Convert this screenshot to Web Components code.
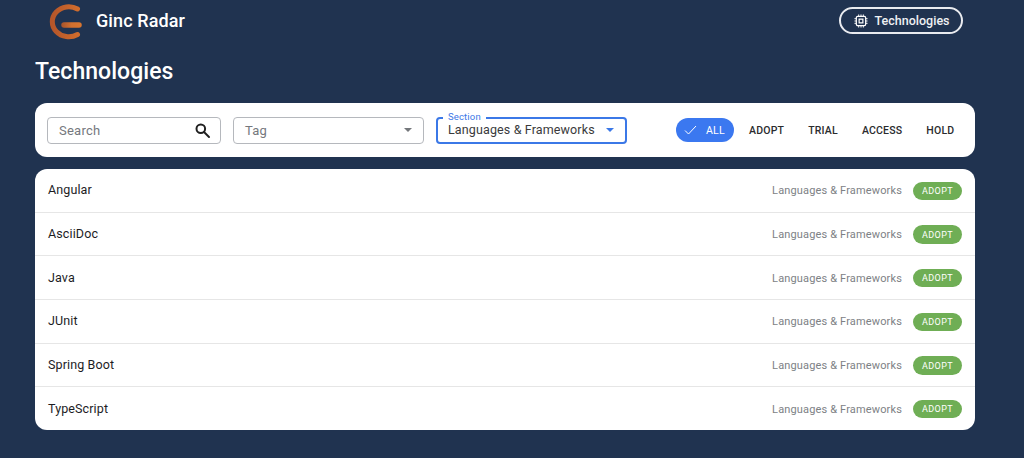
<!DOCTYPE html>
<html><head><meta charset="utf-8"><title>Ginc Radar</title>
<style>
html,body{margin:0;height:100%;}
body{background:#203350;font-family:Roboto,"Liberation Sans",sans-serif;overflow:hidden;}
</style></head><body>
<radar-app></radar-app>
<script>
function el(name,css,html,setup){
  customElements.define(name,class extends HTMLElement{
    constructor(){super();const r=this.attachShadow({mode:'open'});
      r.innerHTML='<style>'+css+'</style>'+(typeof html==='function'?html(this):html);}
    connectedCallback(){if(setup)setup(this);}
  });
}
el('radar-header',`:host{display:flex;align-items:center;height:41px;padding:0 61px 0 49px;color:#fff}
  svg{display:block;flex:none}
  .t{font-size:18px;font-weight:500;margin-left:14px;letter-spacing:.1px;flex:1;white-space:nowrap}
  .b{display:flex;align-items:center;justify-content:center;gap:6px;box-sizing:border-box;width:124px;height:27px;padding-left:2px;border:2px solid #e9ebef;border-radius:14px;font-size:12.500px;font-weight:500;letter-spacing:.02px;color:#eef0f3}`,
`<svg width="33" height="41" viewBox="0 0 33 41"><defs><linearGradient id="g" x1="0" x2="1" y1="0" y2="0"><stop offset="0" stop-color="#b5562a"/><stop offset="1" stop-color="#cf6c2d"/></linearGradient><linearGradient id="h" gradientUnits="userSpaceOnUse" x1="13" x2="32" y1="0" y2="0"><stop offset="0" stop-color="#a9552c"/><stop offset=".5" stop-color="#d2702f"/><stop offset="1" stop-color="#d9762f"/></linearGradient></defs>
<path d="M28.500 9 A 16.500 15 0 1 0 28.500 34.500" fill="none" stroke="url(#g)" stroke-width="5" stroke-linecap="round"/>
<path d="M15 25H30" fill="none" stroke="url(#h)" stroke-width="5.500" stroke-linecap="round"/></svg>
<span class="t">Ginc Radar</span>
<span class="b"><svg width="14" height="14" viewBox="0 0 15 15" fill="none" stroke="#fff"><rect x="2.500" y="2.500" width="10" height="10" rx="1.500" stroke-width="1.300"/><rect x="5.500" y="5.500" width="4" height="4" stroke-width="1.300"/><path d="M5 .5v2M7.500 .5v2M10 .5v2M5 12.500v2M7.500 12.500v2M10 12.500v2M.5 5h2M.5 7.500h2M.5 10h2M12.500 5h2M12.500 7.500h2M12.500 10h2" stroke-width="1"/></svg>Technologies</span>`);

el('radar-field',`:host{display:block;position:relative;box-sizing:border-box;height:27px;border:1px solid #b5b8bd;border-radius:4px;background:#fff;font-size:13px;letter-spacing:.25px;color:#75787d;white-space:nowrap}
  :host([focused]){border:2px solid #3b78e7;color:#3a3a3c;font-size:12.500px;letter-spacing:.13px}
  .in{display:flex;align-items:center;justify-content:space-between;height:100%;padding:0 11px 0 11px}
  :host([focused]) .in{padding:0 11px 0 10px}
  :host([focused]) .in>span:first-child{position:relative;top:-.5px}
  .lab{position:absolute;left:5px;top:-7px;background:#fff;padding:0 5px;font-size:9.500px;line-height:10px;color:#3b78e7;letter-spacing:.15px}
  .ar{width:0;height:0;border:4px solid transparent;border-top:4.500px solid #74777b;border-bottom:0}
  :host([focused]) .ar{border-top-color:#3b78e7}
  svg{display:block;margin-right:-2px}`,
(h)=>{const lab=h.getAttribute('label'),ic=h.getAttribute('icon');
  return (lab?`<span class="lab">${lab}</span>`:'')+`<div class="in"><span><slot></slot></span>`+
  (ic?`<svg width="17" height="17" viewBox="0 0 17 17" fill="none" stroke="#202020" stroke-width="2"><circle cx="6.800" cy="6.800" r="4.300"/><path d="M10 10l5 5" stroke-linecap="round"/></svg>`:`<span class="ar"></span>`)+`</div>`;});

el('radar-chips',`:host{display:flex;align-items:center;font-size:10.500px;font-weight:500;letter-spacing:.2px;color:#2a2b2e}
  span{display:flex;align-items:center;justify-content:center;height:24px;border-radius:12px;white-space:nowrap}
  .on{background:#3b78f0;color:#fff;width:58px;gap:9px;margin-right:15px;font-weight:400;letter-spacing:.3px}
  .on svg{margin-left:-1px}
  .a,.c,.d{margin-right:24px}
  svg{display:block}`,
`<span class="on"><svg width="13" height="10" viewBox="0 0 13 10" fill="none" stroke="#fff" stroke-width="1"><path d="M1 5.500l3.500 3.500L12 1"/></svg>ALL</span><span class="a">ADOPT</span><span class="c">TRIAL</span><span class="d">ACCESS</span><span>HOLD</span>`);

el('radar-toolbar',`:host{display:flex;align-items:center;box-sizing:border-box;height:54px;padding:0 21px 0 12px;background:#fff;border-radius:12px}
  .s{width:174px;margin-right:12px;flex:none}.t{width:191px;margin-right:12px;flex:none}.f{width:191px;margin-right:49px;flex:none}
  radar-chips{flex:none}`,
`<radar-field class="s" icon="search">Search</radar-field><radar-field class="t">Tag</radar-field><radar-field class="f" focused label="Section">Languages &amp; Frameworks</radar-field><radar-chips></radar-chips>`);

el('radar-row',`:host{display:flex;align-items:center;flex:1;padding:1px 13px 0;border-top:1px solid #e6e6e6;font-size:12.500px;color:#1d1d1f;letter-spacing:.12px;min-height:0}
  :host(:first-child){border-top:0}
  .n{flex:1;position:relative;top:-1px}
  .s{font-size:11px;color:#7d8185;letter-spacing:.15px;margin-right:11px}
  .b{display:flex;align-items:center;justify-content:center;width:49px;height:18.500px;border-radius:10px;background:#6fae55;color:#fff;font-size:9px;font-weight:400;letter-spacing:.4px}`,
(h)=>`<span class="n"><slot></slot></span><span class="s">Languages &amp; Frameworks</span><span class="b">ADOPT</span>`);

el('radar-list',`:host{display:flex;flex-direction:column;height:261px;background:#fff;border-radius:12px;overflow:hidden}`,`<slot></slot>`);

el('radar-app',`:host{display:block}
  main{display:block;padding:0 49px 0 35px}
  h1{margin:0;font-size:23px;line-height:28px;font-weight:500;color:#fff;padding:17px 0 17px;letter-spacing:.05px}
  radar-list{margin-top:12px}`,
`<radar-header></radar-header><main><h1>Technologies</h1><radar-toolbar></radar-toolbar><radar-list><radar-row>Angular</radar-row><radar-row>AsciiDoc</radar-row><radar-row>Java</radar-row><radar-row>JUnit</radar-row><radar-row>Spring Boot</radar-row><radar-row>TypeScript</radar-row></radar-list></main>`);
</script></body></html>
